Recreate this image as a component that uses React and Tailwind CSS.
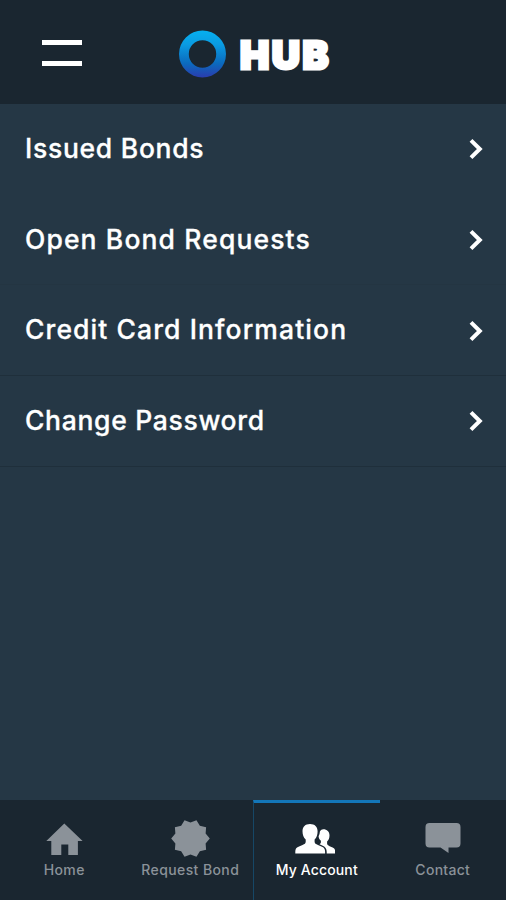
import React, { useState } from "react";

const menuItems = [
  { label: "Issued Bonds", tracking: "tracking-[0.72px]", border: "border-transparent" },
  { label: "Open Bond Requests", tracking: "tracking-[1.12px]", border: "border-[#243542]" },
  { label: "Credit Card Information", tracking: "tracking-[1.1px]", border: "border-[#1f2f3b]" },
  { label: "Change Password", tracking: "tracking-[0.68px]", border: "border-[#1f2f3b]" },
];

// 10 pointed seal
const sealPoints = Array.from({ length: 20 }, (_, i) => {
  const r = i % 2 === 0 ? 19.3 : 15.9;
  const a = (i * Math.PI) / 10;
  return `${(20.5 + r * Math.cos(a)).toFixed(2)},${(19.5 + r * Math.sin(a)).toFixed(2)}`;
}).join(" ");

function HomeIcon() {
  return (
    <svg width="40" height="38" viewBox="0 0 40 38" fill="currentColor">
      <path d="M20.300 4.500 L38.600 22 H33.900 V36 H24.300 V25.500 H17.300 V36 H7.300 V22 H2.300 Z" />
    </svg>
  );
}

function SealIcon() {
  return (
    <svg width="40" height="38" viewBox="0 0 40 38" fill="currentColor">
      <polygon points={sealPoints} />
    </svg>
  );
}

function PeopleIcon() {
  return (
    <svg className="-ml-[3px]" width="40" height="38" viewBox="0 0 40 38" fill="currentColor">
      <path d="M15 5c4.700 0 7.600 2.800 7.600 7.200 0 3.500-1 6.400-3 8.200v2.400c0 1.600 1.200 2.300 3.400 3.300l4 1.700c2.300 1 3.100 2.400 3.100 4.900v1.800H.3v-1.800c0-2.500.9-4 3.200-4.900l4-1.700c2.200-1 3.200-1.700 3.200-3.300v-2.400c-2.100-1.800-3.200-4.700-3.200-8.200C7.500 7.800 10.300 5 15 5z" />
      <path d="M28.300 10.300c3.700 0 6.200 2.500 6.200 6 0 2.700-.8 4.900-2.400 6.300v2c0 1.200.9 1.900 2.500 2.600l3 1.300c1.900.8 2.600 2 2.600 4v2h-8.500v-1.400c0-3.500-1.500-5.300-4.500-6.600l-2.700-1.200c1-.6 1.400-1.200 1.400-2.200v-1.300c-1.500-1.300-2.200-2.700-2.300-4.600.8-1.400 1.200-3 1.300-4.800.9-1.200 2-2.100 3.400-2.100z" />
    </svg>
  );
}

function ChatIcon() {
  return (
    <svg width="40" height="38" viewBox="0 0 40 38" fill="currentColor">
      <path d="M6.500 4h27a4 4 0 0 1 4 4v16.500a4 4 0 0 1-4 4H25.500v5.500L17.500 28.500H6.500a4 4 0 0 1-4-4V8a4 4 0 0 1 4-4z" />
    </svg>
  );
}

const tabs = [
  { id: "home", label: "Home", icon: HomeIcon, tracking: "tracking-[0.4px] pl-px" },
  { id: "request", label: "Request Bond", icon: SealIcon, tracking: "tracking-[0.4px]" },
  { id: "account", label: "My Account", icon: PeopleIcon, tracking: "tracking-[0.15px]" },
  { id: "contact", label: "Contact", icon: ChatIcon, tracking: "tracking-[0.3px] -ml-px" },
];

function Header() {
  return (
    <header className="flex h-[104px] shrink-0 items-center bg-[#1a2630] pl-[42px]">
      <button className="mr-[97px] flex w-10 flex-col gap-4 pt-[2px]" aria-label="Menu">
        <span className="h-[5px] w-full bg-white"></span>
        <span className="h-[5px] w-full bg-white"></span>
      </button>
      <div className="flex items-center pt-1">
        <svg width="47" height="48" viewBox="0 0 48 48">
          <defs>
            <linearGradient id="ring" x1="0" y1="0" x2="0" y2="1">
              <stop offset="0" stopColor="#06b0f0" />
              <stop offset="0.3" stopColor="#0a9be2" />
              <stop offset="0.7" stopColor="#0b6abd" />
              <stop offset="1" stopColor="#2a3cae" />
            </linearGradient>
          </defs>
          <path
            d="M24 0a24 24 0 1 0 0 48a24 24 0 1 0 0-48zM24 10a14 14 0 1 1 0 28a14 14 0 1 1 0-28z"
            fill="url(#ring)"
            fillRule="evenodd"
          />
        </svg>
        <span className="ml-[14px] text-[39px] leading-none font-black tracking-[2.6px] text-white [-webkit-text-stroke:3px_white]">
          HUB
        </span>
      </div>
    </header>
  );
}

export default function App() {
  const [active, setActive] = useState("account");

  return (
    <div className="flex h-[900px] w-[506px] flex-col overflow-hidden bg-[#253745] font-['Inter','Liberation_Sans',sans-serif]">
      <Header />

      <main className="flex-1">
        {menuItems.map((item) => (
          <div
            key={item.label}
            className={`flex h-[90.7px] items-center justify-between border-b pr-[23px] pl-[25px] text-white ${item.border}`}
          >
            <span
              className={`-mt-px text-[26.5px] leading-none font-medium whitespace-nowrap [-webkit-text-stroke:0.3px_white] ${item.tracking}`}
            >
              {item.label}
            </span>
            <svg className="mt-px" width="15" height="22" viewBox="0 0 15 22" fill="none" stroke="currentColor" strokeWidth="4">
              <path d="M3 2.300 L11.800 11 L3 19.700" />
            </svg>
          </div>
        ))}
      </main>

      <nav className="grid h-[100px] shrink-0 grid-cols-4 bg-[#1a2630]">
        {tabs.map((tab) => {
          const Icon = tab.icon;
          const isActive = tab.id === active;
          return (
            <button
              key={tab.id}
              onClick={() => setActive(tab.id)}
              className={`flex flex-col items-center border-t-[3px] border-l pt-4 ${
                isActive ? "border-t-[#1376b8] border-l-[#164766] text-white" : "border-transparent text-[#8b9299]"
              }`}
            >
              <Icon />
              <span className={`mt-[5px] text-[14px] leading-4 font-medium whitespace-nowrap ${tab.tracking}`}>{tab.label}</span>
            </button>
          );
        })}
      </nav>
    </div>
  );
}
